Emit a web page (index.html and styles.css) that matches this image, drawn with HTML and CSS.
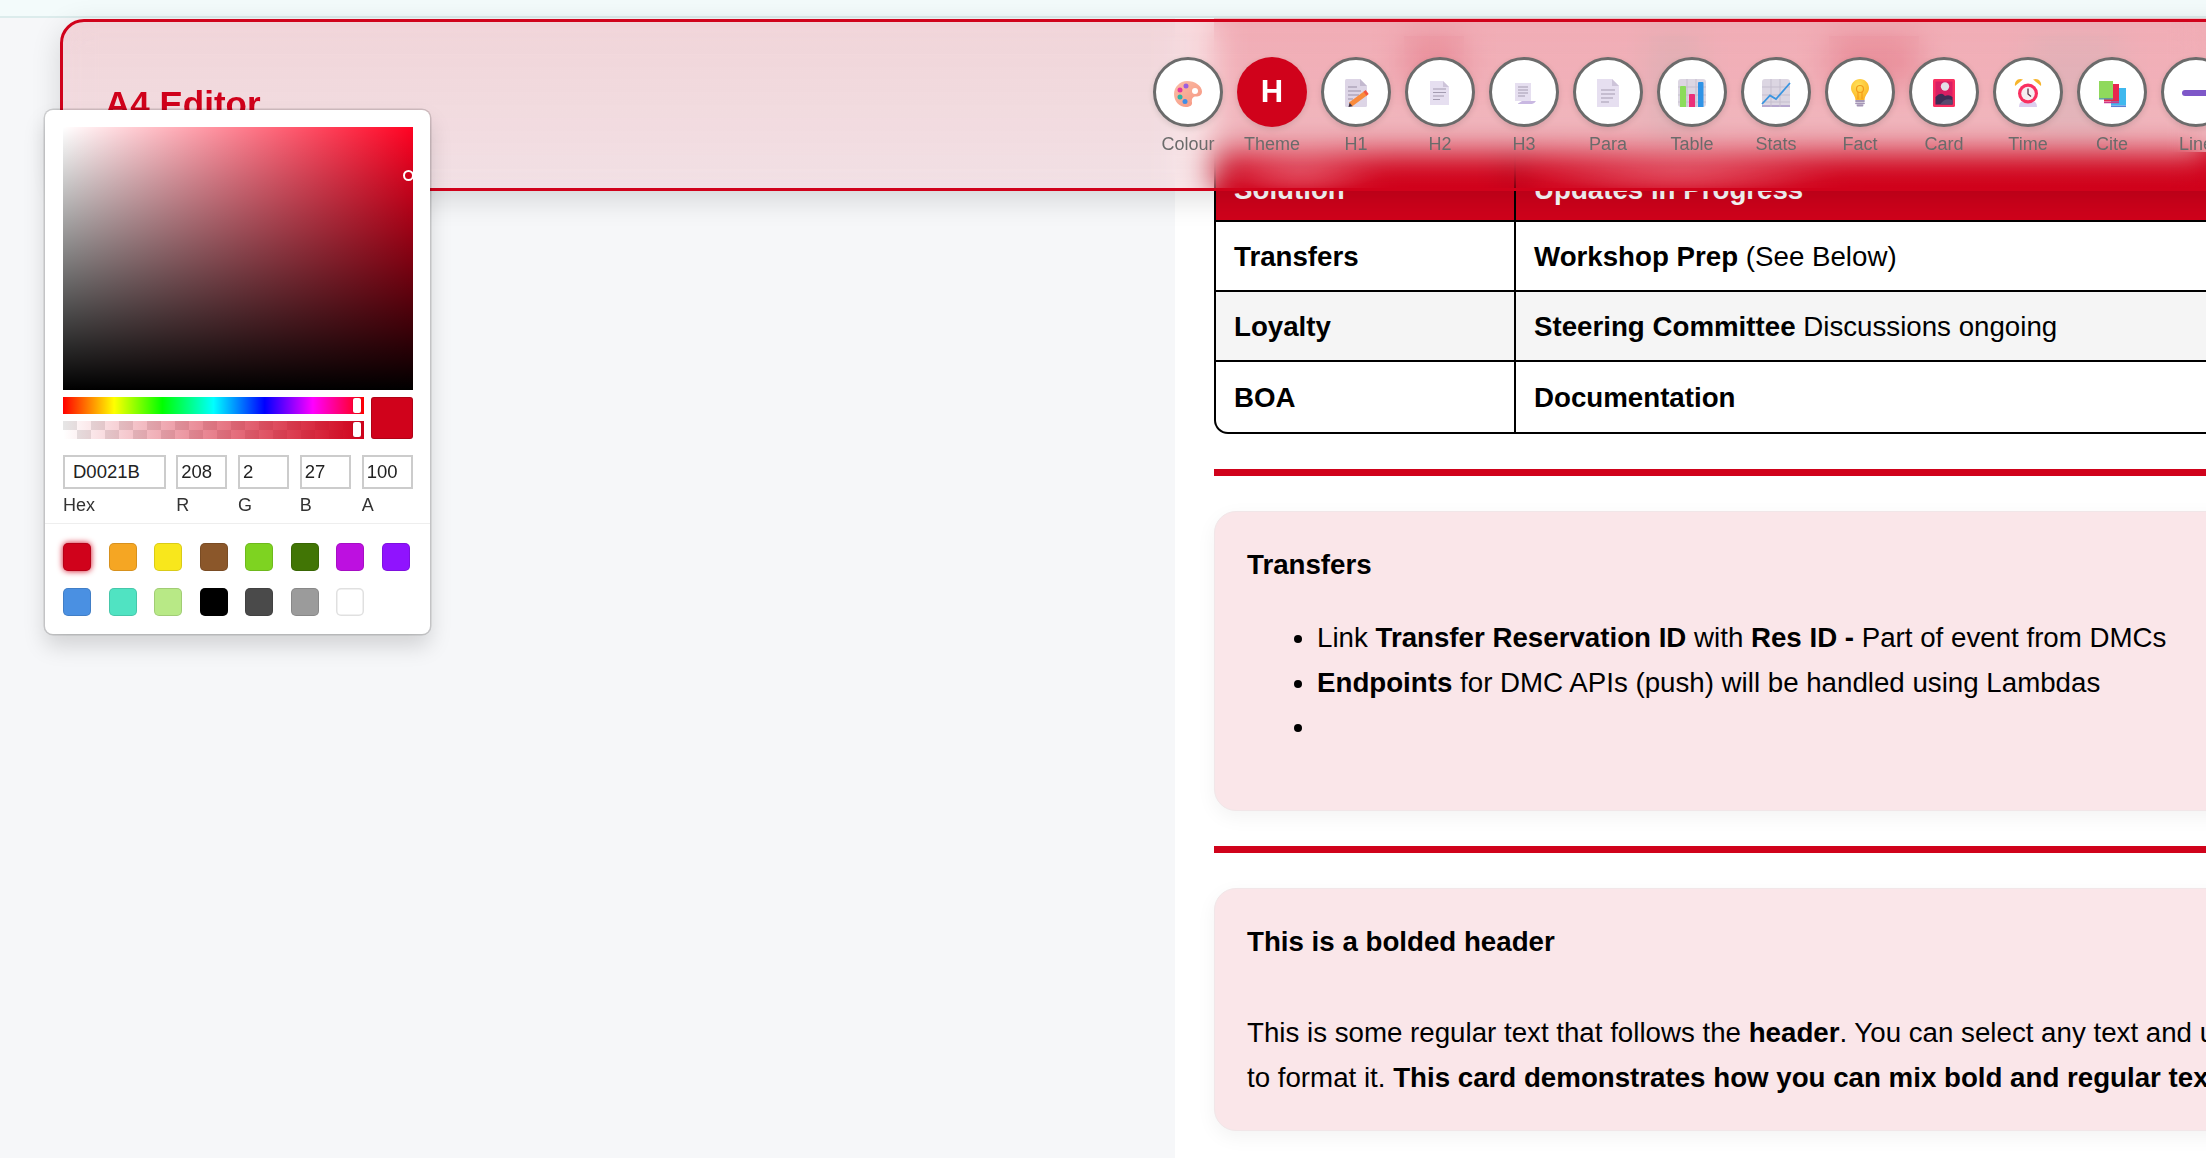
FILE: index.html
```html
<!DOCTYPE html>
<html lang="en">

<head>
    <meta charset="UTF-8">
    <title>A4 Editor</title>
    <link rel="stylesheet" href="styles.css">
</head>

<body>
    <div class="Topbar"></div>

    <main class="Main">
        <aside class="Side"></aside>

        <section class="Doc">
            <!-- sits under the toolbar, only seen through the blur -->
            <div class="Doc-banner">
                <span class="Doc-spot Doc-spot--a"></span>
                <span class="Doc-spot Doc-spot--b"></span>
                <span class="Doc-spot Doc-spot--c"></span>
                <span class="Doc-spot Doc-spot--d"></span>
            </div>

            <div class="Table-wrap">
                <table class="Table">
                    <thead>
                        <tr>
                            <th class="Table-head Table-head--first"><span class="Table-headText">Solution</span></th>
                            <th class="Table-head Table-head--second"><span class="Table-headText">Updates in Progress</span></th>
                        </tr>
                    </thead>
                    <tbody>
                        <tr>
                            <td><b>Transfers</b></td>
                            <td><b>Workshop Prep</b> (See Below)</td>
                        </tr>
                        <tr>
                            <td><b>Loyalty</b></td>
                            <td><b>Steering Committee</b> Discussions ongoing</td>
                        </tr>
                        <tr>
                            <td><b>BOA</b></td>
                            <td><b>Documentation</b></td>
                        </tr>
                    </tbody>
                </table>
            </div>

            <hr class="Rule">

            <div class="Card">
                <p class="Card-title">Transfers</p>
                <ul class="Card-list">
                    <li>Link <b>Transfer Reservation ID</b> with <b>Res ID -</b> Part of event from DMCs</li>
                    <li><b>Endpoints</b> for DMC APIs (push) will be handled using Lambdas</li>
                    <li>&nbsp;</li>
                </ul>
            </div>

            <hr class="Rule">

            <div class="Card Card--last">
                <p class="Card-title Card-title--wide">This is a bolded header</p>
                <p>This is some regular text that follows the <b>header</b>. You can select any text and use the toolbar<br>to format it. <b>This card demonstrates how you can mix bold and regular text</b></p>
            </div>
        </section>
    </main>

    <!-- TOOLBAR -->
    <header class="Toolbar">
        <h1 class="Toolbar-title">A4 Editor</h1>
        <div class="Toolbar-tools">
            <div class="Tool">
                <div class="Tool-circle">
                    <svg viewBox="0 0 32 32" width="32" height="32">
                        <defs><linearGradient id="pal" x1="0" y1="0" x2="1" y2="1"><stop offset="0" stop-color="#fbbfa8"/><stop offset="1" stop-color="#f6937f"/></linearGradient></defs>
                        <path d="M15 5C23 5 30 10 30 15.500C30 19.500 27 20.500 24 20.500C20.500 20.500 19.500 23 20 26.500C20.500 29.500 17.500 31 14 31C7 31 2 25 2 18C2 11 8 5 15 5Z" fill="url(#pal)"/>
                        <circle cx="23" cy="15" r="3" fill="#fff"/>
                        <circle cx="8" cy="14" r="2.500" fill="#e5389b"/>
                        <circle cx="14" cy="10" r="2.500" fill="#9b5fe0"/>
                        <circle cx="8" cy="21" r="2.500" fill="#2fb3a6"/>
                        <circle cx="13" cy="25.500" r="2.500" fill="#3f8fe8"/>
                    </svg>
                </div>
                <span class="Tool-label">Colour</span>
            </div>
            <div class="Tool">
                <div class="Tool-circle Tool-circle--active">H</div>
                <span class="Tool-label">Theme</span>
            </div>
            <div class="Tool">
                <div class="Tool-circle">
                    <svg viewBox="0 0 32 32" width="32" height="32">
                        <path d="M5 4.500Q5 3 6.500 3H20L27 10V29.500Q27 31 25.500 31H6.500Q5 31 5 29.500Z" fill="#ddd5e6"/>
                        <path d="M20 3L27 10H20Z" fill="#c3b9cf"/>
                        <path d="M8 11H17M8 15H21M8 19H19M8 23H13" stroke="#9a90a6" stroke-width="1.200"/>
                        <path d="M10.500 28.500L26 17" stroke="#f98a3c" stroke-width="5"/>
                        <path d="M25 17.700L27.200 16.100" stroke="#f4553f" stroke-width="5"/>
                        <path d="M8.500 31L9.600 26.800L12.500 30.300Z" fill="#3c2f3f"/>
                    </svg>
                </div>
                <span class="Tool-label">H1</span>
            </div>
            <div class="Tool">
                <div class="Tool-circle">
                    <svg viewBox="0 0 32 32" width="32" height="32">
                        <path d="M6 5H19L25 11V29H6Z" fill="#e6dff0"/>
                        <path d="M19 5L25 11H19Z" fill="#cdc4d9"/>
                        <path d="M9 13H22M9 16.500H22M9 20H20M9 23.500H16" stroke="#a39bb0" stroke-width="1.200"/>
                    </svg>
                </div>
                <span class="Tool-label">H2</span>
            </div>
            <div class="Tool">
                <div class="Tool-circle">
                    <svg viewBox="0 0 32 32" width="32" height="32">
                        <path d="M7 7H23V25H7Z" fill="#e6dff0"/>
                        <path d="M10 27.500Q13 25.500 14 25H28Q26 28 24 28H10Z" fill="#c9b8e2"/>
                        <path d="M10 11H20M10 14H20M10 17H20M10 20H17" stroke="#a39bb0" stroke-width="1.200"/>
                    </svg>
                </div>
                <span class="Tool-label">H3</span>
            </div>
            <div class="Tool">
                <div class="Tool-circle">
                    <svg viewBox="0 0 32 32" width="32" height="32">
                        <path d="M5 3H20L27 10V31H5Z" fill="#e6dff0"/>
                        <path d="M20 3L27 10H20Z" fill="#cdc4d9"/>
                        <path d="M9 14H23M9 18H23M9 22H21M9 26H17" stroke="#a39bb0" stroke-width="1.200"/>
                    </svg>
                </div>
                <span class="Tool-label">Para</span>
            </div>
            <div class="Tool">
                <div class="Tool-circle">
                    <svg viewBox="0 0 32 32" width="32" height="32">
                        <rect x="2" y="3" width="28" height="28" rx="3" fill="#dcd6e2"/>
                        <path d="M2 11H30M2 19H30M2 26H30M11 3V31M20 3V31" stroke="#c5bece" stroke-width="1"/>
                        <path d="M4 11Q4 10 5 10H9Q10 10 10 11V31H4Z" fill="#8bdc5a"/>
                        <path d="M13 19Q13 18 14 18H18Q19 18 19 19V31H13Z" fill="#ec2f78"/>
                        <path d="M22 7Q22 6 23 6H26.500Q27.500 6 27.500 7V31H22Z" fill="#2f93e6"/>
                    </svg>
                </div>
                <span class="Tool-label">Table</span>
            </div>
            <div class="Tool">
                <div class="Tool-circle">
                    <svg viewBox="0 0 32 32" width="32" height="32">
                        <rect x="2" y="3" width="28" height="28" rx="3" fill="#dcd6e2"/>
                        <path d="M2 30H30" stroke="#b7a8cf" stroke-width="2"/>
                        <path d="M2 11H30M2 19H30M2 26H30M11 3V31M20 3V31" stroke="#c5bece" stroke-width="1"/>
                        <path d="M2 28L10 19.500L16 23L30 7" fill="none" stroke="#3a95e0" stroke-width="1.800"/>
                    </svg>
                </div>
                <span class="Tool-label">Stats</span>
            </div>
            <div class="Tool">
                <div class="Tool-circle">
                    <svg viewBox="0 0 32 32" width="32" height="32">
                        <defs><radialGradient id="bulb" cx=".4" cy=".3" r=".8"><stop offset="0" stop-color="#ffe25a"/><stop offset="1" stop-color="#fcb01e"/></radialGradient></defs>
                        <path d="M16 3C21 3 25 7 25 12C25 17 21 18.500 20.500 24H11.500C11 18.500 7 17 7 12C7 7 11 3 16 3Z" fill="url(#bulb)"/>
                        <circle cx="16" cy="13" r="3.500" fill="none" stroke="#f29a18" stroke-width="1.200"/>
                        <path d="M14 16V23M18 16V23" stroke="#f29a18" stroke-width="1.100"/>
                        <path d="M12 25H20M12 27.300H20M13.500 29.500H18.500" stroke="#a596b6" stroke-width="1.800" stroke-linecap="round"/>
                    </svg>
                </div>
                <span class="Tool-label">Fact</span>
            </div>
            <div class="Tool">
                <div class="Tool-circle">
                    <svg viewBox="0 0 32 32" width="32" height="32">
                        <rect x="5" y="3" width="22" height="28" rx="1.500" fill="#f92f60"/>
                        <rect x="7.500" y="5.500" width="17" height="23" fill="#d81f63"/>
                        <path d="M7.500 21Q13 15 17 20Q21 18 24.500 21V28.500H7.500Z" fill="#3e2c55"/>
                        <path d="M12 28.500Q17 21 24.500 24V28.500Z" fill="#57496e"/>
                        <circle cx="17" cy="10.500" r="4.200" fill="#e4dfe6"/>
                    </svg>
                </div>
                <span class="Tool-label">Card</span>
            </div>
            <div class="Tool">
                <div class="Tool-circle">
                    <svg viewBox="0 0 32 32" width="32" height="32">
                        <path d="M3 10C2 5.500 6 1.500 11 3.500Z" fill="#f7b52c"/>
                        <path d="M29 10C30 5.500 26 1.500 21 3.500Z" fill="#f7b52c"/>
                        <path d="M7 31Q7 26 11 25H21Q25 26 25 31Z" fill="#dccdee"/>
                        <circle cx="16" cy="17.500" r="10" fill="#f92f60"/>
                        <circle cx="16" cy="17.500" r="6.800" fill="#f6eef2"/>
                        <path d="M16 12.500V18L19 20.500" fill="none" stroke="#5b3a4a" stroke-width="1.300"/>
                    </svg>
                </div>
                <span class="Tool-label">Time</span>
            </div>
            <div class="Tool">
                <div class="Tool-circle">
                    <svg viewBox="0 0 32 32" width="32" height="32">
                        <rect x="15" y="12" width="15" height="17.500" fill="#3fb8ee"/>
                        <path d="M15 30.300H30" stroke="#5a7fd6" stroke-width="1.500"/>
                        <rect x="8" y="8" width="15" height="17.500" fill="#e8264f"/>
                        <path d="M8 26.500H23" stroke="#c8398f" stroke-width="1.500"/>
                        <rect x="3" y="5" width="14" height="17" fill="#8fd95c"/>
                        <path d="M3 22.800H17" stroke="#5c9fa0" stroke-width="1.500"/>
                    </svg>
                </div>
                <span class="Tool-label">Cite</span>
            </div>
            <div class="Tool">
                <div class="Tool-circle">
                    <svg viewBox="0 0 32 32" width="32" height="32">
                        <rect x="2" y="14" width="28" height="6" rx="3" fill="#7e57c8"/>
                    </svg>
                </div>
                <span class="Tool-label">Line</span>
            </div>
        </div>
    </header>

    <!-- COLOUR PICKER -->
    <div class="Picker">
        <div class="Picker-top">
            <div class="Picker-canvas">
                <span class="Picker-dot"></span>
            </div>
            <div class="Picker-controls">
                <div class="Picker-sliders">
                    <div class="Picker-hue"><span class="Picker-handle"></span></div>
                    <div class="Picker-alpha"><span class="Picker-handle"></span></div>
                </div>
                <div class="Picker-preview"></div>
            </div>
            <div class="Picker-fields">
                <label class="Picker-field"><input value="D0021B" class="Picker-input Picker-input--hex">Hex</label>
                <label class="Picker-field"><input value="208" class="Picker-input">R</label>
                <label class="Picker-field"><input value="2" class="Picker-input">G</label>
                <label class="Picker-field"><input value="27" class="Picker-input">B</label>
                <label class="Picker-field"><input value="100" class="Picker-input">A</label>
            </div>
        </div>
        <div class="Picker-swatches">
            <span class="Swatch Swatch--on Swatch--red"></span>
            <span class="Swatch Swatch--orange"></span>
            <span class="Swatch Swatch--yellow"></span>
            <span class="Swatch Swatch--brown"></span>
            <span class="Swatch Swatch--lime"></span>
            <span class="Swatch Swatch--green"></span>
            <span class="Swatch Swatch--magenta"></span>
            <span class="Swatch Swatch--violet"></span>
            <span class="Swatch Swatch--blue"></span>
            <span class="Swatch Swatch--teal"></span>
            <span class="Swatch Swatch--mint"></span>
            <span class="Swatch Swatch--black"></span>
            <span class="Swatch Swatch--dark"></span>
            <span class="Swatch Swatch--grey"></span>
            <span class="Swatch Swatch--white"></span>
        </div>
    </div>
</body>

</html>
```

FILE: styles.css
```css
/* VARIABLES */
:root {
    --color-brand: #d0021b;
    --color-page: #f6f7f9;
    --color-card: #fae6e9;
    --font-main: "Liberation Sans", Arial, sans-serif;
}

/* RESET */
* {
    margin: 0;
    padding: 0;
    box-sizing: border-box;
}

body {
    width: 2206px;
    height: 1158px;
    overflow: hidden;
    position: relative;
    background-color: var(--color-page);
    color: #000;
    font-family: var(--font-main);
    font-size: 27.7px;
    line-height: 44.8px;
}

.Topbar {
    height: 18px;
    background-color: #f3fbfb;
    border-bottom: 2px solid #dcecec;
}

/* MAIN */
.Main {
    display: flex;
    height: 1140px;
}

.Side {
    flex: 0 0 1175px;
}

/* DOCUMENT */
.Doc {
    flex: 0 0 1300px;
    padding-left: 39px;
    background-color: #fff;
}

.Doc-banner {
    height: 134px;
    display: flex;
    background: linear-gradient(#f6c9cf, #f6c9cf 70%, #f1d7da);
}

.Doc-spot {
    display: block;
    height: 50px;
    margin-top: 18px;
}

.Doc-spot--a {
    width: 60px;
    margin-left: 190px;
    background-color: #eda4ae;
}

.Doc-spot--b {
    width: 50px;
    height: 100px;
    margin-left: 185px;
    background-color: #e3c9cc;
}

.Doc-spot--c {
    width: 90px;
    margin-left: 130px;
    background-color: #eda4ae;
}

.Doc-spot--d {
    width: 90px;
    height: 100px;
    margin-left: 110px;
    background-color: #e6cbcf;
}

/* TABLE */
.Table-wrap {
    border: 2px solid #000;
    border-top: 0;
    border-radius: 0 0 0 14px;
    overflow: hidden;
}

.Table {
    width: 100%;
    table-layout: fixed;
    border-collapse: separate;
    border-spacing: 0;
}

.Table th,
.Table td {
    height: 70px;
    padding: 2px 18px 0;
    text-align: left;
    vertical-align: middle;
    border-bottom: 2px solid #000;
}

.Table th {
    padding-top: 8px;
    background-color: var(--color-brand);
    color: #fff;
}

/* the part of the header text under the toolbar only shows as a light smear */
.Table-head {
    background-repeat: no-repeat;
    background-image: radial-gradient(closest-side, rgba(240, 130, 145, 0.85), rgba(240, 130, 145, 0));
    background-position: 0 0;
}

.Table-head--first {
    background-size: 170px 38px;
}

.Table-head--second {
    background-size: 330px 38px;
}

.Table-headText {
    display: inline-block;
    clip-path: inset(23px 0 0 0);
}

.Table th:first-child,
.Table td:first-child {
    width: 300px;
    border-right: 2px solid #000;
}

.Table tbody tr:nth-child(2) td {
    background-color: #f5f5f5;
}

.Table tbody tr:last-child td {
    border-bottom: 0;
}

.Rule {
    height: 7px;
    margin: 35px 0;
    border: 0;
    background-color: var(--color-brand);
}

/* CARDS */
.Card {
    height: 300px;
    padding: 31px 32px;
    background-color: var(--color-card);
    border: 1px solid #f1e6e8;
    border-radius: 22px;
    box-shadow: 0 6px 20px rgba(0, 0, 0, 0.05);
}

.Card--last {
    height: 243px;
    margin-top: 35px;
}

.Card-title {
    font-weight: bold;
    margin-bottom: 28px;
}

.Card-title--wide {
    margin-bottom: 46px;
}

.Card-list {
    padding-left: 70px;
}

/* TOOLBAR */
.Toolbar {
    position: absolute;
    left: 60px;
    top: 19px;
    width: 2300px;
    height: 172px;
    display: flex;
    padding: 35px 0 0 42px;
    border: 3px solid var(--color-brand);
    border-radius: 24px;
    background: linear-gradient(rgba(208, 2, 27, 0.14), rgba(208, 2, 27, 0.09));
    backdrop-filter: blur(16px);
    box-shadow: 0 8px 30px rgba(0, 0, 0, 0.14);
}

.Toolbar-title {
    flex: 0 0 1048px;
    margin-top: 27px;
    color: var(--color-brand);
    font-size: 35px;
    line-height: 40px;
}

.Toolbar-tools {
    display: flex;
    gap: 14px;
}

.Tool {
    display: flex;
    flex-direction: column;
    align-items: center;
    width: 70px;
    font-size: 18px;
    line-height: 20px;
}

.Tool-circle {
    display: flex;
    justify-content: center;
    align-items: center;
    width: 70px;
    height: 70px;
    border: 3px solid #6b6b6b;
    border-radius: 50%;
    background-color: #fff;
    box-shadow: 0 2px 6px rgba(0, 0, 0, 0.12);
}

.Tool-circle--active {
    border: 0;
    background-color: var(--color-brand);
    color: #fff;
    font-size: 31px;
    font-weight: bold;
}

.Tool-label {
    margin-top: 7px;
    color: #6b6b6b;
    white-space: nowrap;
}

/* COLOUR PICKER */
.Picker {
    position: absolute;
    left: 45px;
    top: 110px;
    width: 385px;
    height: 524px;
    background-color: #fff;
    border-radius: 8px;
    box-shadow: 0 0 0 1.500px rgba(0, 0, 0, 0.15), 0 12px 22px rgba(0, 0, 0, 0.15);
    color: #333;
    font-size: 18px;
    line-height: 24px;
}

.Picker-top {
    height: 414px;
    padding: 17px 17px 0 18px;
    border-bottom: 1px solid #eee;
}

.Picker-canvas {
    position: relative;
    height: 263px;
    background:
        linear-gradient(to top, #000, transparent),
        linear-gradient(to right, #fff, #ff0222);
}

.Picker-dot {
    position: absolute;
    left: 340px;
    top: 43px;
    width: 11px;
    height: 11px;
    border: 2px solid #fff;
    border-radius: 50%;
    background-color: var(--color-brand);
}

.Picker-controls {
    display: flex;
    gap: 7px;
    margin-top: 7px;
}

.Picker-sliders {
    flex: 1;
}

.Picker-hue,
.Picker-alpha {
    position: relative;
}

.Picker-hue {
    height: 17px;
    margin-bottom: 7px;
    background: linear-gradient(to right, #f00, #ff0 17%, #0f0 33%, #0ff 50%, #00f 67%, #f0f 83%, #f00);
}

.Picker-alpha {
    height: 18px;
    background:
        linear-gradient(to right, rgba(208, 2, 27, 0), #d0021b),
        repeating-conic-gradient(#fff 0 25%, #e6e6e6 0 50%) 0 0 / 28px 18px;
}

.Picker-handle {
    position: absolute;
    right: 3px;
    top: 1px;
    width: 8px;
    height: 15px;
    background-color: #fff;
    border-radius: 2px;
    box-shadow: 0 0 1px rgba(0, 0, 0, 0.5);
}

.Picker-preview {
    flex: 0 0 42px;
    height: 42px;
    background-color: var(--color-brand);
    border-radius: 3px;
    box-shadow: inset 0 0 0 1px rgba(0, 0, 0, 0.15);
}

.Picker-fields {
    display: grid;
    grid-template-columns: 2fr 1fr 1fr 1fr 1fr;
    gap: 10.500px;
    margin-top: 16px;
}

.Picker-field {
    display: flex;
    flex-direction: column;
    gap: 4px;
}

.Picker-input {
    width: 100%;
    height: 34px;
    padding: 0 2px 0 3px;
    border: 2px solid #ccc;
    outline: 0;
    color: #222;
    font-family: var(--font-main);
    font-size: 18.500px;
}

.Picker-input--hex {
    padding-left: 8px;
}

.Picker-swatches {
    display: grid;
    grid-template-columns: repeat(8, 28px);
    column-gap: 17.500px;
    row-gap: 17px;
    padding: 19px 17px 0 18px;
}

.Swatch {
    display: block;
    height: 28px;
    border-radius: 5px;
    box-shadow: inset 0 0 0 1px rgba(0, 0, 0, 0.12);
}

.Swatch--on {
    box-shadow: inset 0 0 0 1px rgba(0, 0, 0, 0.12), 0 0 6px #d0021b;
}

.Swatch--white {
    box-shadow: inset 0 0 0 1.500px rgba(0, 0, 0, 0.12);
}

.Swatch--red { background-color: #d0021b; }
.Swatch--orange { background-color: #f5a623; }
.Swatch--yellow { background-color: #f8e71c; }
.Swatch--brown { background-color: #8b572a; }
.Swatch--lime { background-color: #7ed321; }
.Swatch--green { background-color: #417505; }
.Swatch--magenta { background-color: #bd10e0; }
.Swatch--violet { background-color: #9013fe; }
.Swatch--blue { background-color: #4a90e2; }
.Swatch--teal { background-color: #50e3c2; }
.Swatch--mint { background-color: #b8e986; }
.Swatch--black { background-color: #000; }
.Swatch--dark { background-color: #4a4a4a; }
.Swatch--grey { background-color: #9b9b9b; }
.Swatch--white { background-color: #fff; }
```
